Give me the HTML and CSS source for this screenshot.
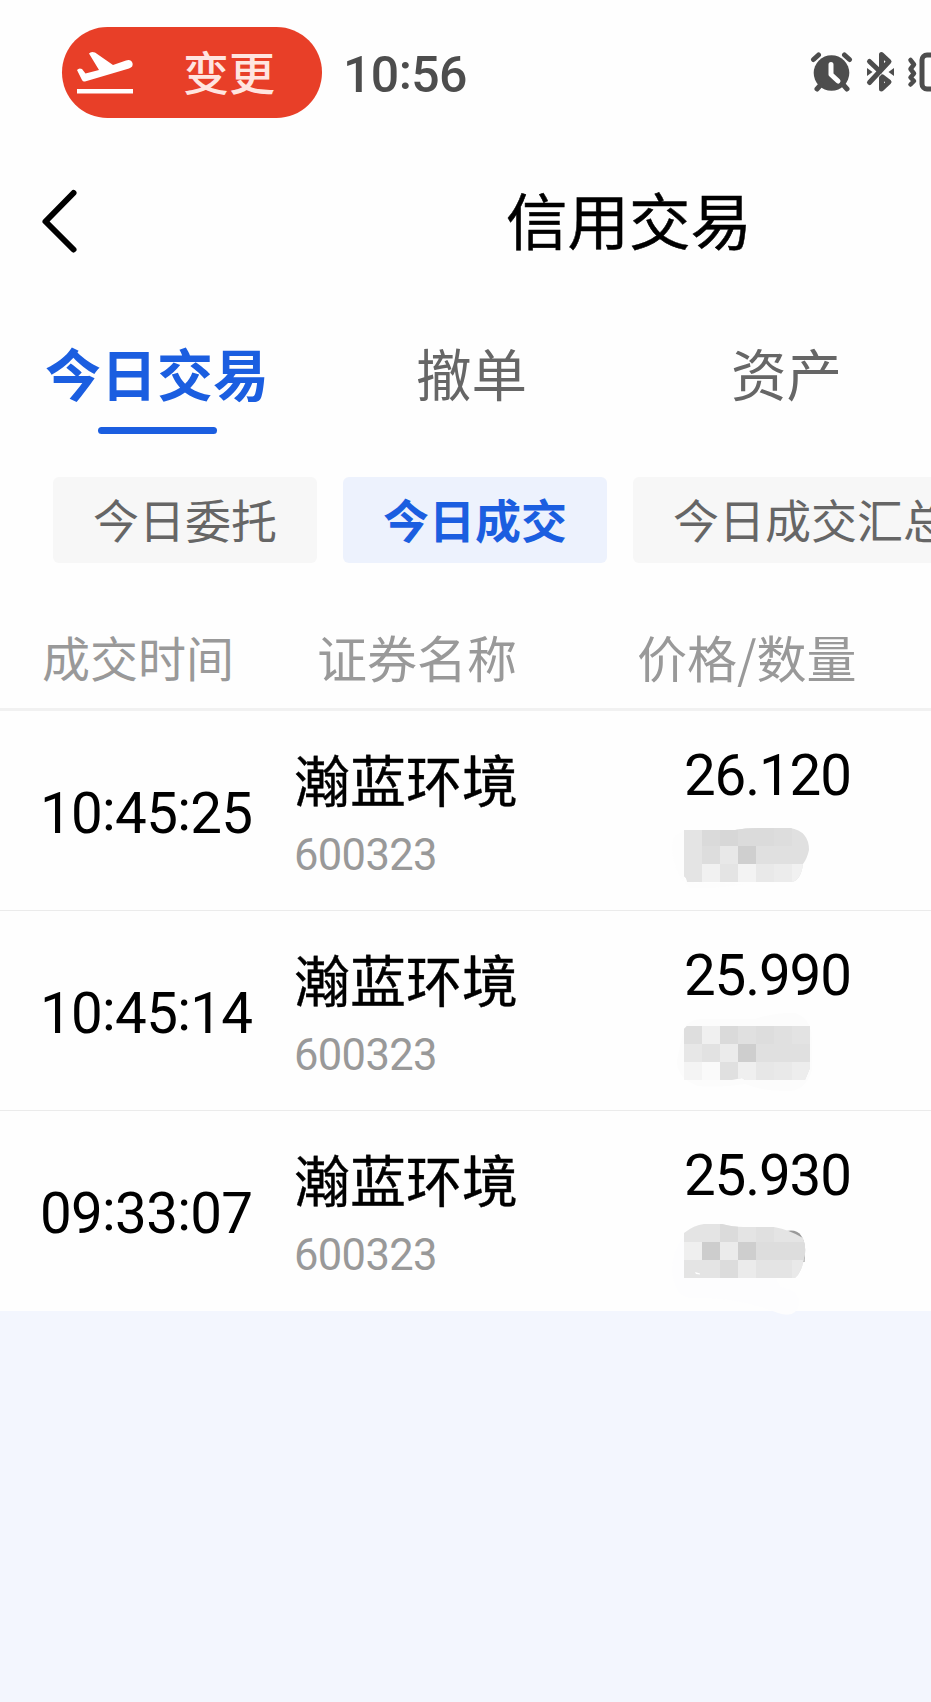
FILE: index.html
```html
<!DOCTYPE html>
<html lang="zh-CN">
<head>
<meta charset="utf-8">
<title>信用交易</title>
<link rel="stylesheet" href="styles.css">
</head>
<body>
<div class="screen">
  <div class="status">
    <div class="pill">
      <svg class="plane" width="58" height="44" viewBox="0 0 58 44">
        <path d="M1 19Q3 16.500 6 18L9.500 22.500L23 19L13 2.500Q15 0 19 1.500L37 14L50 9.500Q55 8 56.500 12Q57.500 16 53 17.500L9 30.500Q7 31 6 29Z" fill="#fff"/>
        <rect x="1" y="38" width="56" height="4.500" fill="#fff"/>
      </svg>
      <span class="pill-text">变更</span>
    </div>
    <div class="clock">10<span class="colon">:</span>56</div>
    <svg class="sys" width="121" height="44" viewBox="810 50 121 44">
      <g stroke="#4d4d4d" fill="none" stroke-linecap="round" stroke-linejoin="round">
        <circle cx="831.500" cy="73" r="17.800" fill="#4d4d4d" stroke="none"/>
        <path d="M813.500 59.500L818.500 55M849.500 59.500L844.500 55M817 89L821 84.500M847 89L843 84.500" stroke-width="5"/>
        <path d="M831 64.500V74.500L838 81" stroke="#fff" stroke-width="5"/>
        <path d="M869.500 61.500L880 71.500M881.500 69V54.500L889 61.500L869.500 82.500M881.500 78V89L889 82L882.500 77" stroke-width="5"/>
        <path d="M867 68L872.500 72L867 76ZM894 68L888.500 72L894 76Z" fill="#4d4d4d" stroke="none"/>
        <path d="M910.500 60L914 64.500L910.500 69L914 73.500L910.500 77.500L914 81L910.500 84.500" stroke-width="4.500"/>
        <rect x="922" y="55" width="30" height="34" rx="5" stroke-width="5"/>
      </g>
    </svg>
  </div>

  <div class="nav">
    <svg class="back" width="44" height="68" viewBox="0 0 44 68"><path d="M35.500 6L7.500 34.500L35.500 62.500" fill="none" stroke="#000" stroke-width="6" stroke-linecap="round" stroke-linejoin="round"/></svg>
    <div class="title">信用交易</div>
  </div>

  <div class="tabs">
    <div class="tab active">今日交易<i class="bar"></i></div>
    <div class="tab cancel">撤单</div>
    <div class="tab assets">资产</div>
  </div>

  <div class="chips">
    <div class="chip">今日委托</div>
    <div class="chip on">今日成交</div>
    <div class="chip">今日成交汇总</div>
  </div>

  <div class="grid head">
    <div class="h-time">成交时间</div>
    <div class="h-name">证券名称</div>
    <div class="h-price">价格/数量</div>
  </div>

  <div class="grid row">
    <div class="time">10<span class="colon">:</span>45<span class="colon">:</span>25</div>
    <div class="stock"><div class="name">瀚蓝环境</div><div class="code">600323</div></div>
    <div class="deal"><div class="price">26.120</div>
      <svg class="mosaic" width="140" height="100" viewBox="684 811 140 100">
        <clipPath id="c1"><path d="M684 830H735Q745 828 758 828H790Q809 831 809 850Q807 859 803 864Q801 880 792 882H687Q687 878 684 876Z"/></clipPath>
        <path d="M684 831Q672 834 672 848Q674 874 690 888Q720 889 745 884L684 882Z" fill="#fdfdfd"/>
        <g clip-path="url(#c1)" shape-rendering="crispEdges">
          <rect x="684" y="828" width="126" height="54" fill="#e0e0e0"/>
          <rect x="684" y="828" width="18" height="54" fill="#e4e4e4"/>
          <rect x="702" y="828" width="18" height="18" fill="#dadada"/><rect x="720" y="828" width="18" height="18" fill="#d7d7d7"/><rect x="738" y="828" width="36" height="18" fill="#dbdbdb"/><rect x="774" y="828" width="18" height="18" fill="#dddddd"/>
          <rect x="702" y="846" width="18" height="18" fill="#dddddd"/><rect x="720" y="846" width="18" height="18" fill="#e8e8e8"/><rect x="738" y="846" width="18" height="18" fill="#cfcfcf"/>
          <rect x="702" y="864" width="18" height="18" fill="#f1f1f1"/><rect x="720" y="864" width="18" height="18" fill="#e4e4e4"/><rect x="738" y="864" width="18" height="18" fill="#f3f3f3"/><rect x="756" y="864" width="18" height="18" fill="#e9e9e9"/><rect x="774" y="864" width="18" height="18" fill="#ececec"/><rect x="792" y="864" width="18" height="18" fill="#f1f1f1"/>
        </g>
      </svg>
    </div>
  </div>

  <div class="grid row">
    <div class="time">10<span class="colon">:</span>45<span class="colon">:</span>14</div>
    <div class="stock"><div class="name">瀚蓝环境</div><div class="code">600323</div></div>
    <div class="deal"><div class="price">25.990</div>
      <svg class="mosaic" width="140" height="100" viewBox="684 1011 140 100">
        <path d="M684 1028Q690 1019 702 1019H755Q775 1012 795 1013Q812 1018 812 1040V1070Q806 1090 790 1091Q765 1092 745 1084Q720 1088 698 1086Q676 1078 677 1060Z" fill="#fcfcfc"/>
        <clipPath id="c2"><path d="M687 1026H810V1068L805 1080H745L742 1078L732 1080H684V1029Z"/></clipPath>
        <g clip-path="url(#c2)" shape-rendering="crispEdges">
          <rect x="684" y="1026" width="126" height="54" fill="#e0e0e0"/>
          <rect x="684" y="1026" width="18" height="18" fill="#dedede"/><rect x="702" y="1026" width="18" height="18" fill="#f0f0f0"/><rect x="720" y="1026" width="18" height="18" fill="#dadada"/><rect x="756" y="1026" width="18" height="18" fill="#dddddd"/><rect x="792" y="1026" width="18" height="18" fill="#e3e3e3"/>
          <rect x="684" y="1044" width="18" height="18" fill="#e7e7e7"/><rect x="702" y="1044" width="18" height="18" fill="#e2e2e2"/><rect x="720" y="1044" width="18" height="18" fill="#ebebeb"/><rect x="738" y="1044" width="18" height="18" fill="#cecece"/>
          <rect x="684" y="1062" width="18" height="18" fill="#f4f4f4"/><rect x="702" y="1062" width="18" height="18" fill="#fafafa"/><rect x="738" y="1062" width="18" height="18" fill="#efefef"/><rect x="756" y="1062" width="18" height="18" fill="#e7e7e7"/><rect x="774" y="1062" width="18" height="18" fill="#e9e9e9"/><rect x="792" y="1062" width="18" height="18" fill="#ededed"/>
        </g>
      </svg>
    </div>
  </div>

  <div class="grid row last">
    <div class="time">09<span class="colon">:</span>33<span class="colon">:</span>07</div>
    <div class="stock"><div class="name">瀚蓝环境</div><div class="code">600323</div></div>
    <div class="deal"><div class="price">25.930</div>
      <svg class="mosaic" width="140" height="100" viewBox="684 1211 140 100">
        <path d="M684 1236Q672 1250 672 1270Q674 1297 690 1298Q735 1296 778 1313Q796 1319 799 1304Q800 1290 780 1287L776 1278H684Z" fill="#fdfdfe"/>
        <path d="M786 1231Q804 1227 805 1250L804.500 1262L803 1262L795 1250Z" fill="#999"/>
        <clipPath id="c3"><path d="M684 1233Q694 1225 704 1224H722Q732 1227 744 1227H774Q790 1230 803 1238Q807 1249 804 1258Q802 1272 795 1278H684Z"/></clipPath>
        <g clip-path="url(#c3)" shape-rendering="crispEdges">
          <rect x="684" y="1224" width="126" height="54" fill="#e4e4e4"/>
          <rect x="720" y="1224" width="18" height="18" fill="#dbdbdb"/><rect x="756" y="1224" width="18" height="18" fill="#e0e0e0"/>
          <rect x="684" y="1242" width="18" height="18" fill="#efefef"/><rect x="702" y="1242" width="18" height="18" fill="#cdcdcd"/><rect x="720" y="1242" width="18" height="18" fill="#ebebeb"/><rect x="738" y="1242" width="18" height="18" fill="#cecece"/><rect x="756" y="1242" width="54" height="18" fill="#dddddd"/>
          <rect x="720" y="1260" width="18" height="18" fill="#dcdcdc"/><rect x="738" y="1260" width="18" height="18" fill="#ebebeb"/><rect x="792" y="1260" width="18" height="18" fill="#e9e9e9"/>
        </g>
        <path d="M695 1272L700 1273.500V1274.500L696 1274Z" fill="#fff"/>
      </svg>
    </div>
  </div>
</div>
</body>
</html>
```
FILE: styles.css
```css
* { box-sizing: border-box; }
body { margin: 0; background: #f3f6fe; font-family: "Noto Sans CJK SC", sans-serif; }
.screen { width: 931px; height: 1702px; overflow: hidden; background: #f3f6fe; white-space: nowrap; }
svg { display: block; flex: none; }
.status, .nav, .tabs, .chips, .head, .row { background: #fefefe; }

.status { display: flex; height: 146px; padding: 27px 0 0 62px; }
.pill { display: flex; width: 260px; height: 91px; padding-left: 14px; border-radius: 46px; background: #e83f28; }
.plane { margin-top: 24px; }
.pill-text { margin-left: 49px; font-size: 46px; line-height: 86px; font-weight: 500; color: #ffe5e0; }
.clock { width: 467px; margin-left: 21px; padding-top: 2px; font: 500 50px/92px Roboto, sans-serif; letter-spacing: -0.6px; color: #4d4d4d; }
.colon { position: relative; top: -0.06em; }
.sys { margin-top: 23px; }

.nav { display: flex; height: 164px; padding-left: 38px; }
.back { margin-top: 41px; }
.title { margin-left: 424px; font-size: 61.500px; line-height: 146px; color: #000; -webkit-text-stroke: 0.5px #000; }

.tabs { display: flex; height: 167px; padding-left: 45px; font-size: 55.500px; line-height: 124px; color: #666; }
.tab { height: 124px; }
.active { width: 371px; font-size: 56px; color: #1b5ee0; font-weight: 700; }
.bar { display: block; width: 119px; height: 7px; margin: -7px 0 0 53px; border-radius: 3.500px; background: #1b5ee0; }
.cancel { width: 315px; }

.chips { display: flex; gap: 26px; height: 112px; padding-left: 53px; font-size: 46px; line-height: 83px; color: #666; }
.chip { flex: none; height: 86px; padding: 0 40px; border-radius: 6px; background: #f7f7f7; }
.on { background: #edf2fd; color: #1b5ee0; font-weight: 700; }

.grid { display: grid; grid-template-columns: 295px 389px 247px; }
.head { height: 122px; border-bottom: 3px solid #f1f1f1; line-height: 135px; color: #999; }
.h-time { padding-left: 42px; font-size: 48px; }
.h-name { padding-left: 22px; font-size: 50px; }
.h-price { margin-left: -47px; font-size: 50px; }

.row { height: 200px; border-bottom: 1px solid #ebebeb; color: #000; }
.last { border-bottom: 0; }
.time { padding-left: 40px; font: 56.500px/206px Roboto, sans-serif; letter-spacing: -0.7px; }
.stock { padding-top: 31px; margin-left: -1px; }
.name { height: 72px; font-size: 56px; line-height: 72px; -webkit-text-stroke: 0.4px #000; }
.code { font: 43.500px/84px Roboto, sans-serif; letter-spacing: -0.65px; color: #999; }
.deal { padding-top: 28px; }
.price { height: 72px; font: 56.500px/74px Roboto, sans-serif; letter-spacing: -1.150px; }
.mosaic { overflow: visible; }
```
